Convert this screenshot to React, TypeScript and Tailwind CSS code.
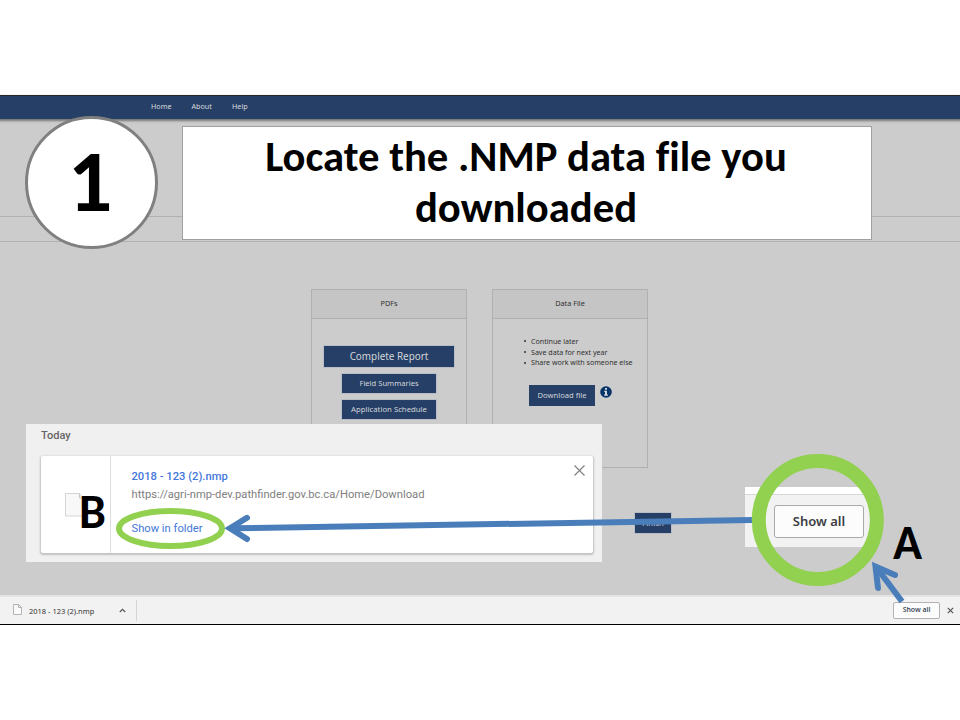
import React from "react";

const ui = "font-['Noto_Sans','Open_Sans',sans-serif]";
const title = "font-['Carlito','Lato',sans-serif] font-bold text-black [font-variant-ligatures:none]";
const navy = "bg-[#263f66] text-[#d2d5da] outline outline-1 outline-[#b9bec6]";

function NavBar() {
  return (
    <nav className="flex h-[23px] shrink-0 items-center gap-5 bg-[#263f66] pb-0.5 pl-[151px] text-[7.2px] text-[#d8dade] shadow-[0_1px_2px_1px_#777]">
      <span className="w-[20.5px] whitespace-nowrap">Home</span>
      <span className="w-[20.5px] whitespace-nowrap">About</span>
      <span className="whitespace-nowrap">Help</span>
    </nav>
  );
}

function Panel({ heading, children }: { heading: string; children: React.ReactNode }) {
  return (
    <section className="h-[179px] w-[156px] border border-[#b0b0b0]">
      <h2 className="flex h-[29px] items-center justify-center border-b border-[#b0b0b0] bg-[#c5c5c5] pb-0.5 text-[7.3px] text-[#333]">
        {heading}
      </h2>
      {children}
    </section>
  );
}

function InfoIcon() {
  return (
    <svg className="mt-px" width="12" height="12" viewBox="0 0 12 12">
      <circle cx="6" cy="6" r="5.8" fill="#073468" />
      <path d="M5 2h2v1.8H5zM4.2 4.8H7v3.7h.9v1.3H4.1V8.5H5V6.1h-.8z" fill="#d4d8dc" />
    </svg>
  );
}

function Page() {
  return (
    <div className="flex h-[499px] flex-col bg-[#ccc]">
      <NavBar />
      <div className="h-[98px] shrink-0 border-b border-[#b0b0b0]" />
      <div className="h-[25px] shrink-0 border-b border-[#b0b0b0]" />
      <main className="flex flex-col pt-[47px]">
        <div className="flex gap-[25px] pl-[311px]">
          <Panel heading="PDFs">
            <div className="flex flex-col items-center pt-[27px]">
              <button className={`${navy} h-[21px] w-[130px] pb-px text-[9.9px] leading-5`}>Complete Report</button>
              <button className={`${navy} mt-[7px] h-[19px] w-[94px] text-[7.6px]`}>Field Summaries</button>
              <button className={`${navy} mt-[7px] h-[19px] w-[94px] text-[7.75px]`}>Application Schedule</button>
            </div>
          </Panel>
          <Panel heading="Data File">
            <ul className="mt-[17px] pl-[31px] text-[7.1px] leading-[10.7px] whitespace-nowrap text-[#303030]">
              {["Continue later", "Save data for next year", "Share work with someone else"].map((item) => (
                <li key={item} className="flex items-center gap-[5px]">
                  <i className="h-0.5 w-0.5 shrink-0 rounded-full bg-[#333]" />
                  {item}
                </li>
              ))}
            </ul>
            <div className="mt-[17px] flex gap-[5px] pl-9">
              <button className="h-[21px] w-[66px] bg-[#263f66] text-[7.6px] text-[#d2d5da]">Download file</button>
              <InfoIcon />
            </div>
          </Panel>
        </div>
        <button className={`${navy} mt-[45px] ml-[635px] h-[20px] w-[36px] pt-0.5 text-[7.8px]`}>Finish</button>
      </main>
    </div>
  );
}

function DownloadBar() {
  return (
    <footer className="flex h-[29px] items-center border-t-2 border-[#e4e4e4] bg-[#f2f2f2] text-[#333]">
      <svg className="mb-0.5 ml-[13px]" width="9" height="11" viewBox="0 0 9 11">
        <path d="M.5.5h5l3 3v7h-8zM5.5.5v3h3" fill="#fafafa" stroke="#a5a5a5" strokeWidth=".8" />
      </svg>
      <span className="mt-0.5 ml-[7px] w-[84px] text-[7.5px] whitespace-nowrap">2018 - 123 (2).nmp</span>
      <svg className="ml-[6px]" width="7" height="5" viewBox="0 0 7 5">
        <path d="M.8 4 3.5 1.3 6.2 4" fill="none" stroke="#555" strokeWidth="1.2" />
      </svg>
      <span className="ml-[10px] h-[21px] w-px bg-[#d4d4d4]" />
      <button className="ml-auto h-[17px] w-[47px] rounded-[2px] border border-[#b3b3b3] bg-[#fcfcfc] text-[6.9px] font-semibold whitespace-nowrap text-[#3c4d5c]">
        Show all
      </button>
      <svg className="mr-[6px] ml-[7px]" width="7" height="7" viewBox="0 0 7 7">
        <path d="m.8.8 5.4 5.4m0-5.4L.8 6.2" stroke="#555" strokeWidth="1.2" />
      </svg>
    </footer>
  );
}

function DownloadsPopup() {
  return (
    <div className="absolute top-[424px] left-[26px] h-[138px] w-[576px] bg-[#f0f0f0] px-[15px] pt-[5px] font-['Roboto',sans-serif]">
      <h3 className="h-[27px] text-[11px] leading-[14px] font-medium text-[#666]">Today</h3>
      <div className="flex h-[97px] w-[552px] rounded-[2px] bg-white shadow-[0_1px_2px_1px_#c0c0c0]">
        <div className="w-[70px] shrink-0 border-r border-[#ddd] pt-[37px] pl-6">
          <svg width="20" height="24" viewBox="0 0 20 24">
            <path d="M.5.5h14l4.5 4.5v18H.5z" fill="#f8f8f8" stroke="#d5d5d5" />
            <path d="M14.5.5V5H19" fill="#eee" stroke="#c6c6c6" />
          </svg>
        </div>
        <div className="flex flex-col pt-[14px] pl-[20.5px] text-[11.2px] leading-[14px] whitespace-nowrap">
          <span className="font-medium text-[#4377da]">2018 - 123 (2).nmp</span>
          <span className="mt-1 text-[#808080]">https://agri-nmp-dev.pathfinder.gov.bc.ca/Home/Download</span>
          <span className="mt-[20px] text-[#4377da]">Show in folder</span>
        </div>
        <svg className="mt-[9px] mr-2 ml-auto" width="11" height="11" viewBox="0 0 11 11">
          <path d="m.5.5 10 10m0-10-10 10" stroke="#808080" strokeWidth="1.2" />
        </svg>
      </div>
    </div>
  );
}

function MagnifiedButton() {
  return (
    <div className="absolute top-[487px] left-[745px] h-[60px] w-[125px] border-t-[7px] border-white bg-[#f2f2f2]">
      <div className="h-px bg-[#d8d8d8]" />
      <button className="mt-[10px] ml-[29px] block h-[33px] w-[90px] rounded-[3px] border-[1.5px] border-[#aaa] bg-[#fcfcfc] text-[13px] font-semibold text-[#3d3d42]">
        Show all
      </button>
    </div>
  );
}

function Arrows() {
  return (
    <svg className="absolute top-0 left-0" width="960" height="720" viewBox="0 0 960 720" fill="none">
      <ellipse cx="170.5" cy="528.5" rx="51.5" ry="17.5" stroke="#92d050" strokeWidth="6" />
      <g stroke="#4a7ebb" strokeWidth="6">
        <path d="M232 528.3 752 520" />
        <path d="M247 517.8 230 528.3 247 539" strokeLinecap="round" strokeLinejoin="miter" />
        <path d="M902 601.5 876.5 567.5" />
        <path d="M895 575 875.5 566.5 878 588" strokeLinecap="round" strokeLinejoin="miter" />
      </g>
      <circle cx="817.8" cy="520" r="59" stroke="#92d050" strokeWidth="14" />
    </svg>
  );
}

export default function App() {
  return (
    <div className={`relative h-[720px] w-[960px] overflow-hidden bg-white pt-[95px] ${ui}`}>
      <div className="h-[530px] border-y border-black">
        <Page />
        <DownloadBar />
      </div>
      <div className={`absolute top-[126px] left-[182px] flex h-[114px] w-[690px] justify-center border border-[#a0a0a0] bg-white pt-1 pr-0.5 text-center text-[42.67px] leading-[51px] ${title}`}>
        <h1 className="w-[620px]">Locate the .NMP data file you downloaded</h1>
      </div>
      <div className={`absolute top-[116px] left-[25px] flex h-[133px] w-[133px] items-center justify-center rounded-full border-[3px] border-[#808080] bg-white pr-[3px] pb-[3px] text-[88px] leading-none ${title}`}>
        1
      </div>
      <DownloadsPopup />
      <MagnifiedButton />
      <Arrows />
      <div className={`absolute top-[488px] left-[79px] text-[48px] leading-[48px] ${title}`}>B</div>
      <div className={`absolute top-[519px] left-[893px] text-[48px] leading-[48px] ${title}`}>A</div>
    </div>
  );
}
